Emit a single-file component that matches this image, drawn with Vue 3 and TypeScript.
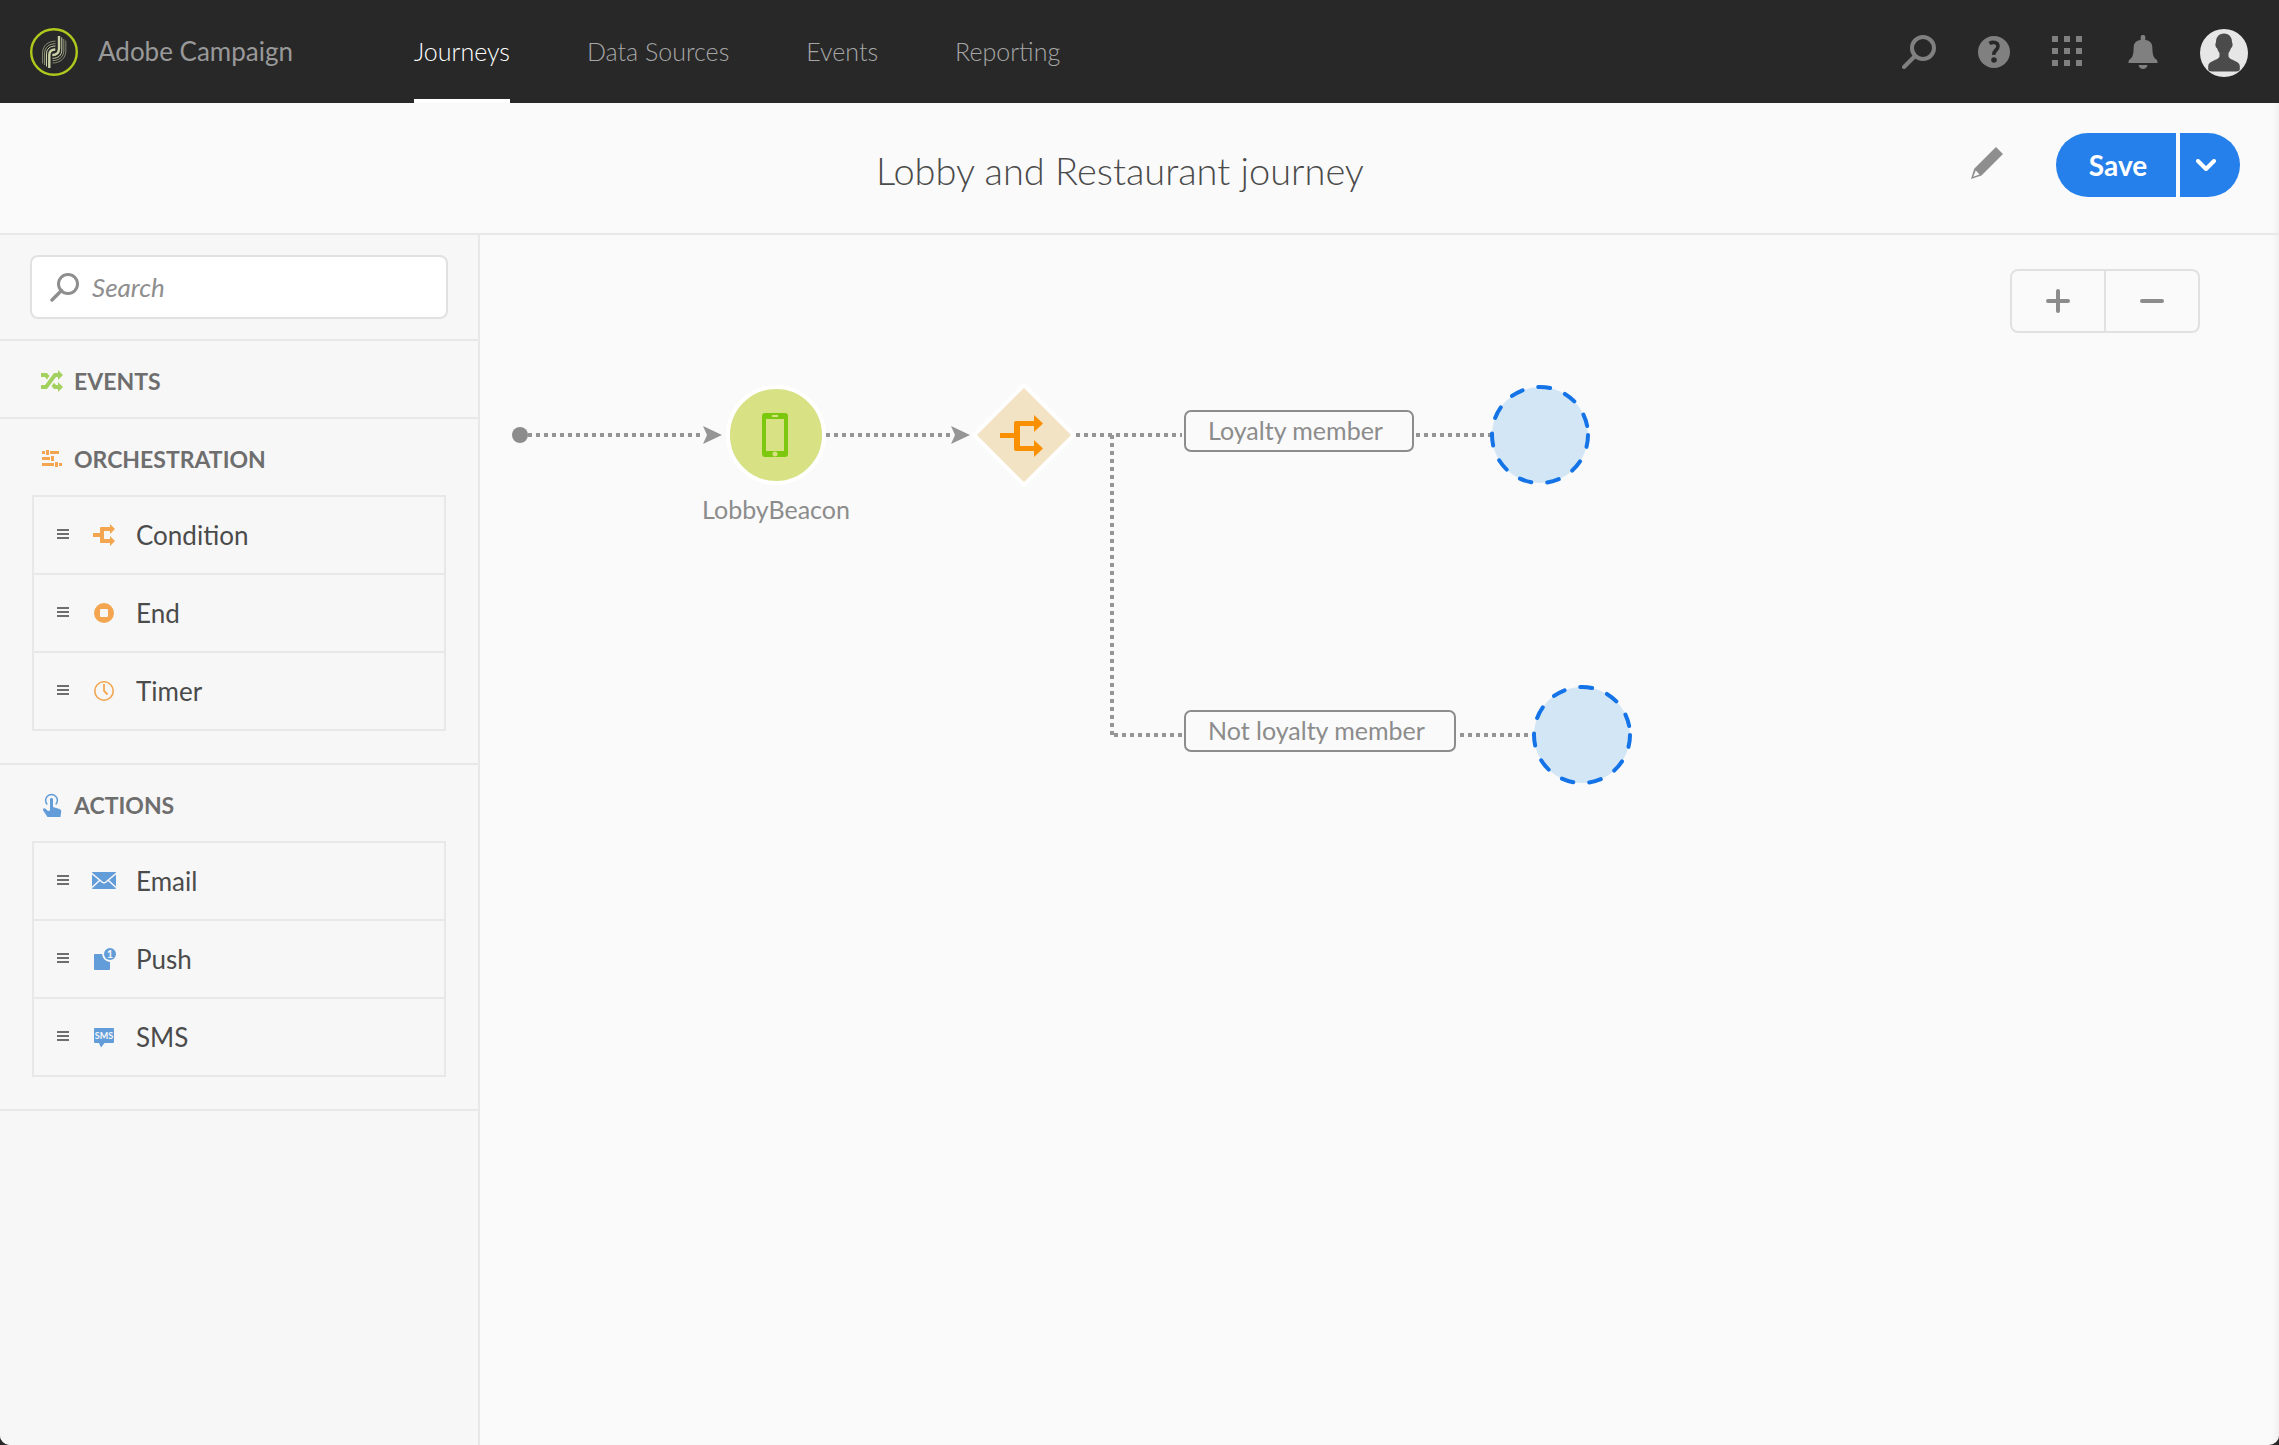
<script setup lang="ts">
import { ref } from 'vue'

interface PaletteItem {
  id: string
  label: string
}

interface PaletteSection {
  id: string
  title: string
  items: PaletteItem[]
}

const navItems = ['Journeys', 'Data Sources', 'Events', 'Reporting']
const activeNav = ref('Journeys')
const query = ref('')

const sections: PaletteSection[] = [
  { id: 'events', title: 'EVENTS', items: [] },
  {
    id: 'orchestration',
    title: 'ORCHESTRATION',
    items: [
      { id: 'condition', label: 'Condition' },
      { id: 'end', label: 'End' },
      { id: 'timer', label: 'Timer' },
    ],
  },
  {
    id: 'actions',
    title: 'ACTIONS',
    items: [
      { id: 'email', label: 'Email' },
      { id: 'push', label: 'Push' },
      { id: 'sms', label: 'SMS' },
    ],
  },
]
</script>

<template>
  <div class="app">
    <header class="topbar">
      <a class="brand" href="#">
        <svg class="brand-logo" viewBox="0 0 48 48" aria-hidden="true">
          <circle cx="24" cy="24" r="22.8" fill="none" stroke="#b0c91c" stroke-width="2.4" />
          <g fill="none" stroke="#ccd2a8">
            <path d="M19.3 40V27c0-3.300 2.200-5.500 6-5.500" stroke-width="2.400" />
            <path d="M29 8v12.500c0 4-2.400 6.500-6.700 6.500" stroke-width="2.400" />
            <path d="M16.500 38.500V26c0-5.300 3.500-8 9-8" stroke-width="1" />
            <path d="M14.600 37V25.500c0-6.300 4.400-9.800 10.900-9.800" stroke-width="0.800" opacity="0.8" />
            <path d="M12.600 35.500V25c0-7.500 5.400-11.800 12.900-11.800" stroke-width="0.700" opacity="0.8" />
            <path d="M31.800 9.500V22c0 5.300-3.500 8.300-9.300 8.300" stroke-width="1" />
            <path d="M33.800 11v11.500c0 6.300-4.600 10.100-11.300 10.100" stroke-width="0.800" opacity="0.8" />
            <path d="M35.800 12.500V23c0 7.500-5.800 12-13.300 12" stroke-width="0.700" opacity="0.8" />
          </g>
        </svg>
        <span class="brand-name">Adobe Campaign</span>
      </a>
      <nav class="nav">
        <a
          v-for="item in navItems"
          :key="item"
          href="#"
          class="nav-link"
          :class="{ active: item === activeNav }"
          @click.prevent="activeNav = item"
        >{{ item }}</a>
      </nav>
      <div class="tools">
        <button class="tool" type="button" aria-label="Search">
          <svg width="34" height="34" viewBox="0 0 34 34">
            <circle cx="21" cy="13" r="11" fill="none" stroke="#808080" stroke-width="4" />
            <path d="M13 21 2 32" stroke="#808080" stroke-width="4" stroke-linecap="round" />
          </svg>
        </button>
        <button class="tool" type="button" aria-label="Help">
          <svg width="32" height="32" viewBox="0 0 32 32">
            <circle cx="16" cy="16" r="16" fill="#808080" />
            <path d="M11.500 7.500C14.500 5.500 20 6 20 10.200c0 4-4.600 4-4.200 8.600" fill="none" stroke="#282828" stroke-width="3.600" />
            <circle cx="16" cy="24" r="2.800" fill="#282828" />
          </svg>
        </button>
        <button class="tool" type="button" aria-label="Apps">
          <svg width="30" height="32" viewBox="0 0 30 32" fill="#808080">
            <path d="M0 0h6v6H0zM12 0h6v6h-6zM24 0h6v6h-6zM0 12h6v6H0zM12 12h6v6h-6zM24 12h6v6h-6zM0 24h6v6H0zM12 24h6v6h-6zM24 24h6v6h-6z" />
          </svg>
        </button>
        <button class="tool" type="button" aria-label="Notifications">
          <svg width="34" height="34" viewBox="-4 0 34 34" fill="#808080">
            <path d="M12.700 5V2c0-2.600 4.600-2.600 4.600 0v3c4.700.5 6.700 3 7 7 .3 7 .5 10 4.500 13 .6.700.7 1.500.7 3H.5c0-1.500.1-2.300.7-3 4-3 4.200-6 4.500-13 .3-4 2.300-6.500 7-7z" />
            <path d="M10.500 30h9c-.8 5.300-8.200 5.300-9 0z" />
          </svg>
        </button>
        <button class="tool avatar" type="button" aria-label="Account">
          <svg width="48" height="48" viewBox="0 0 48 48">
            <circle cx="24" cy="24" r="24" fill="#e6e6e6" />
            <path d="M24 4.500c5.500 0 8.200 4 8 9 1 .5.800 5-1 5.500-.6 2.200-1.500 3.500-2.500 5v3.500c1 4 11.300 4 11.300 9.500v3.500c0 1.200-1.800 2-3.800 2H12c-2 0-3.800-.8-3.800-2V37c0-5.500 10.300-5.500 11.300-9.500V24c-1-1.500-1.900-2.800-2.500-5-1.800-.5-2-5-1-5.500-.2-5 2.500-9 8-9z" fill="#4b4b4b" />
          </svg>
        </button>
      </div>
    </header>

    <div class="titlebar">
      <h1 class="title">Lobby and Restaurant journey</h1>
      <div class="actions">
        <button class="edit" type="button" aria-label="Edit">
          <svg width="32" height="32" viewBox="0 0 32 32">
            <path fill-rule="evenodd" d="M25 0l7 7L10.500 28.500 0 32l3.200-10.200zM4.800 23.500 2.200 29.800l6.300-2.200z" fill="#8e8e8e" />
          </svg>
        </button>
        <div class="split">
          <button class="save" type="button">Save</button>
          <button class="save-more" type="button" aria-label="More save options">
            <svg width="20" height="12" viewBox="0 0 20 12">
              <path d="M2 2l8 8 8-8" fill="none" stroke="#fff" stroke-width="4" stroke-linecap="round" stroke-linejoin="round" />
            </svg>
          </button>
        </div>
      </div>
    </div>

    <div class="workspace">
      <aside class="sidebar">
        <div class="search-area">
          <label class="search">
            <svg width="30" height="30" viewBox="0 0 30 30" aria-hidden="true">
              <circle cx="18" cy="12" r="9.500" fill="none" stroke="#8e8e8e" stroke-width="3" />
              <path d="M11.500 18.500 2 28" stroke="#8e8e8e" stroke-width="3.400" stroke-linecap="round" />
            </svg>
            <input v-model="query" type="text" placeholder="Search" aria-label="Search" />
          </label>
        </div>

        <section v-for="section in sections" :key="section.id" class="section" :class="{ filled: section.items.length }">
          <h2 class="section-title">
            <svg v-if="section.id === 'events'" width="24" height="24" viewBox="0 0 24 24" fill="#a3d15f">
              <path d="M1 4h6l2.500 3-2.600 3.500L5 8H1zM1 16h4l9-12h4V1l5 5-5 5V8h-2L7 20H1zM11.500 17l2.600-3.300L16 16h2v-3l5 5-5 5v-3h-4z" />
            </svg>
            <svg v-else-if="section.id === 'orchestration'" width="24" height="24" viewBox="0 0 24 24" fill="#f4a550">
              <path d="M2 4h3v3H2zM6 3h3v5H6zM10 4h9v3h-9zM2 10h8v3H2zM11 9h3v5h-3zM2 16h12v3H2zM15 15h3v5h-3zM19 16h3v3h-3z" />
            </svg>
            <svg v-else width="24" height="24" viewBox="0 0 24 24">
              <path d="M7.300 11.500A5.900 5.900 0 1 1 15.700 11.500" fill="none" stroke="#629dda" stroke-width="1.500" />
              <path d="M10 6.500c0-2 3-2 3 0V14l6.500 2c1.200.4 1.800 1.200 1.700 2.500L20.500 24H7.500L3.200 17.500c-1-2 1-3 2.300-1.800L8 18l2-.5z" fill="#629dda" />
            </svg>
            <span>{{ section.title }}</span>
          </h2>
          <ul v-if="section.items.length" class="items">
            <li v-for="item in section.items" :key="item.id" class="item" draggable="true">
              <svg width="12" height="12" viewBox="0 0 12 12" fill="#6e6e6e" aria-hidden="true">
                <path d="M0 0h12v2H0zM0 4h12v2H0zM0 8h12v2H0z" />
              </svg>
              <svg class="item-icon" width="24" height="24" viewBox="0 0 24 24" aria-hidden="true">
                <path v-if="item.id === 'condition'" d="M1 10h7V5q0-1 1-1h9V1l5 5-5 5V8h-6v8h6v-3l5 5-5 5v-3H9q-1 0-1-1v-5H1z" fill="#f4a550" />
                <template v-else-if="item.id === 'end'">
                  <circle cx="12" cy="12" r="10" fill="#f4a550" />
                  <rect x="8" y="8" width="8" height="8" rx="1" fill="#f7f7f7" />
                </template>
                <template v-else-if="item.id === 'timer'">
                  <circle cx="12" cy="12" r="9.200" fill="none" stroke="#f4a550" stroke-width="1.600" />
                  <path d="M12 5v7l3.500 3.500" fill="none" stroke="#f4a550" stroke-width="1.800" />
                </template>
                <template v-else-if="item.id === 'email'">
                  <rect y="3" width="24" height="17" rx="1" fill="#629dda" />
                  <path d="M0 4.500l10 8.500q2 1.500 4 0l10-8.500M0 18.500l7.500-7M24 18.500l-7.500-7" fill="none" stroke="#f7f7f7" stroke-width="1.500" />
                </template>
                <template v-else-if="item.id === 'push'">
                  <path d="M2 8q0-1 1-1h7.200a8 8 0 0 0 7.800 8v7q0 1-1 1H3q-1 0-1-1z" fill="#629dda" />
                  <circle cx="18" cy="7" r="6" fill="#629dda" />
                  <text class="glyph" x="18" y="11" font-size="11">1</text>
                </template>
                <template v-else>
                  <path d="M3 3h18q1 0 1 1v13q0 1-1 1h-8.500l-3.500 4.500L7 18H3q-1 0-1-1V4q0-1 1-1z" fill="#629dda" />
                  <text class="glyph" x="12" y="14" font-size="9">SMS</text>
                </template>
              </svg>
              <span>{{ item.label }}</span>
            </li>
          </ul>
        </section>
      </aside>

      <main class="canvas">
        <svg class="diagram" width="1180" height="560" viewBox="0 0 1180 560" aria-hidden="true">
          <g class="wires">
            <path d="M48 200H224" />
            <path d="M346 200H472" />
            <path d="M596 200H702" />
            <path d="M632 200V500" />
            <path d="M634 500H704" />
            <path d="M936 200H1012" />
            <path d="M980 500H1050" />
          </g>
          <circle cx="40" cy="200" r="8" fill="#8c8c8c" />
          <path d="M223 191l19 9-19 9 4-9zM471 191l19 9-19 9 4-9z" fill="#959595" />
          <circle cx="296" cy="200" r="48" fill="#d8e183" stroke="#fff" stroke-width="4" />
          <path fill-rule="evenodd" d="M285 178h20q3 0 3 3v38q0 3-3 3h-20q-3 0-3-3v-38q0-3 3-3zM286 184v32h18v-32z" fill="#7cc80e" />
          <path d="M292 181h6" stroke="#d8e183" stroke-width="2" />
          <circle cx="295" cy="219" r="2.500" fill="#d8e183" />
          <path d="M544 150l50 50-50 50-50-50z" fill="#f1e3c4" stroke="#fff" stroke-width="4" stroke-linejoin="round" />
          <path d="M520 198h14v-10q0-2 2-2h18v-6l9 8.500-9 8.500v-6h-14v20h14v-6l9 8.500-9 8.500v-6h-18q-2 0-2-2v-11h-14z" fill="#fa8f00" />
          <circle class="drop" cx="1060" cy="200" r="48" />
          <circle class="drop" cx="1102" cy="500" r="48" />
        </svg>
        <span class="node-name">LobbyBeacon</span>
        <span class="branch loyal">Loyalty member</span>
        <span class="branch other">Not loyalty member</span>
        <div class="zoom">
          <button type="button" aria-label="Zoom in">
            <svg width="24" height="24" viewBox="0 0 24 24"><path d="M12 2v20M2 12h20" /></svg>
          </button>
          <button type="button" aria-label="Zoom out">
            <svg width="24" height="24" viewBox="0 0 24 24"><path d="M2 12h20" /></svg>
          </button>
        </div>
      </main>
    </div>
  </div>
</template>

<style>
body {
  margin: 0;
  background: #282828;
}
</style>

<style scoped>
.app {
  display: flex;
  flex-direction: column;
  min-height: 100vh;
  overflow: hidden;
  border-radius: 0 0 10px 10px;
  background: #fafafa;
  color: #4b4b4b;
  font-family: Lato, "Open Sans", sans-serif;
  font-size: 26px;
}

.app * {
  box-sizing: border-box;
}

button {
  display: flex;
  align-items: center;
  justify-content: center;
  margin: 0;
  padding: 0;
  border: 0;
  background: none;
  font: inherit;
  cursor: pointer;
}

a {
  color: inherit;
  text-decoration: none;
}

svg {
  display: block;
  flex: none;
}

.topbar {
  display: flex;
  align-items: center;
  height: 103px;
  padding: 0 31px 0 30px;
  background: #282828;
  color: #999;
}

.brand {
  display: flex;
  align-items: center;
  gap: 20px;
  width: 384px;
}

.brand-logo {
  width: 48px;
  height: 48px;
}

.brand-name {
  padding-bottom: 2px;
}

.nav {
  display: flex;
  flex: 1;
  align-self: stretch;
  gap: 77px;
  color: #a6a6a6;
  font-size: 25px;
  font-weight: 300;
}

.nav-link {
  display: flex;
  align-items: center;
  padding-top: 2px;
  border-bottom: 4px solid transparent;
}

.nav-link.active {
  border-bottom-color: #fff;
  color: #fff;
}

.tools {
  display: flex;
  align-items: center;
  gap: 42px;
}

.avatar {
  padding-top: 2px;
}

.titlebar {
  display: flex;
  align-items: center;
  height: 132px;
  padding-right: 39px;
  border-bottom: 2px solid #e8e8e8;
  box-shadow: inset -6px 0 6px -4px #ececec;
}

.title {
  flex: 1;
  margin: 0;
  padding: 4px 0 0 269px;
  font-size: 38px;
  font-weight: 300;
  line-height: 48px;
  text-align: center;
}

.actions {
  display: flex;
  align-items: center;
  gap: 53px;
  padding-bottom: 6px;
}

.edit {
  padding-bottom: 4px;
}

.split {
  display: flex;
  gap: 4px;
}

.save,
.save-more {
  height: 64px;
  background: #2680eb;
  color: #fff;
}

.save {
  width: 120px;
  border-radius: 32px 0 0 32px;
  padding-left: 4px;
  font-size: 28px;
  font-weight: 700;
}

.save-more {
  width: 60px;
  border-radius: 0 32px 32px 0;
  padding-right: 8px;
}

.workspace {
  display: flex;
  flex: 1;
}

.sidebar {
  width: 480px;
  border-right: 2px solid #e8e8e8;
  background: #f7f7f7;
}

.search-area {
  padding: 20px 30px;
  border-bottom: 2px solid #e8e8e8;
}

.search {
  display: flex;
  align-items: center;
  gap: 12px;
  height: 64px;
  padding: 0 18px;
  border: 2px solid #e1e1e1;
  border-radius: 8px;
  background: #fff;
}

.search input {
  flex: 1;
  min-width: 0;
  padding: 0;
  border: 0;
  outline: 0;
  background: none;
  color: #4b4b4b;
  font: inherit;
}

.search input::placeholder {
  color: #8e8e8e;
  font-style: italic;
  opacity: 1;
}

.section {
  border-bottom: 2px solid #e8e8e8;
}

.section.filled {
  padding-bottom: 32px;
}

.section-title {
  display: flex;
  align-items: center;
  gap: 10px;
  height: 76px;
  margin: 0;
  padding: 4px 0 0 40px;
  color: #6e6e6e;
  font-size: 23px;
  font-weight: 700;
}

.items {
  margin: 0 32px;
  padding: 0;
  border: 2px solid #e8e8e8;
  list-style: none;
}

.item {
  display: flex;
  align-items: center;
  height: 76px;
  padding-left: 23px;
}

.item + .item {
  height: 78px;
  border-top: 2px solid #e8e8e8;
}

.item-icon {
  margin: 0 20px 0 23px;
}

.glyph {
  fill: #f7f7f7;
  font-weight: 700;
  text-anchor: middle;
}

.canvas {
  position: relative;
  flex: 1;
  box-shadow: inset -6px 0 6px -4px #ececec;
}

.wires path {
  fill: none;
  stroke: #959595;
  stroke-width: 4;
  stroke-dasharray: 4 4;
}

.drop {
  fill: #d3e6f5;
  stroke: #1473e6;
  stroke-width: 4;
  stroke-dasharray: 12 16;
  stroke-linecap: round;
}

.node-name,
.branch {
  position: absolute;
  color: #8c8c8c;
  font-size: 25px;
  white-space: nowrap;
}

.node-name {
  top: 258px;
  left: 176px;
  width: 240px;
  line-height: 32px;
  text-align: center;
}

.branch {
  left: 704px;
  height: 42px;
  padding-left: 22px;
  border: 2px solid #8c8c8c;
  border-radius: 7px;
  background: #fafafa;
  line-height: 36px;
}

.loyal {
  top: 175px;
  width: 230px;
}

.other {
  top: 475px;
  width: 272px;
}

.zoom {
  position: absolute;
  top: 34px;
  right: 79px;
  display: flex;
  border: 2px solid #e1e1e1;
  border-radius: 8px;
}

.zoom button {
  width: 92px;
  height: 60px;
}

.zoom button + button {
  width: 94px;
  border-left: 2px solid #e1e1e1;
}

.zoom path {
  stroke: #8c8c8c;
  stroke-width: 4;
  stroke-linecap: round;
}
</style>
